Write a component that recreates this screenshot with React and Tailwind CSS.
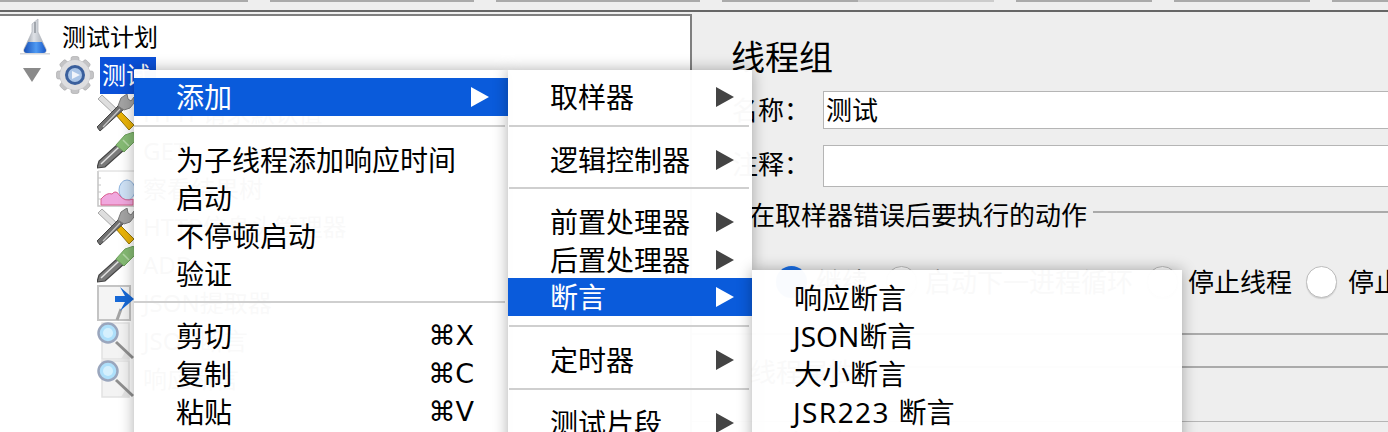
const Flask = () => (
  <svg width="30" height="38" viewBox="0 0 30 38" className="shrink-0">
    <defs>
      <linearGradient id="fl" x1="0" x2="1" y1="0" y2="0"><stop offset="0" stopColor="#1850b8" /><stop offset="0.55" stopColor="#4f9af2" /><stop offset="1" stopColor="#1a58c8" /></linearGradient>
      <linearGradient id="gl" x1="0" x2="1" y1="0" y2="0"><stop offset="0" stopColor="#7f8690" /><stop offset="0.45" stopColor="#dfe2e7" /><stop offset="1" stopColor="#98a0aa" /></linearGradient>
    </defs>
    <path d="M12 6 L18 1 L18 14 L26 31 Q27 35 23 35 L7 35 Q3 35 4 31 L12 14 Z" fill="url(#gl)" stroke="#b6bac1" strokeWidth="0.8" />
    <path d="M8 24 L22 24 L26 32 Q26 35 23 35 L7 35 Q4 35 4 32 Z" fill="url(#fl)" />
    <path d="M15 4 L15 15" stroke="#8f949c" strokeWidth="1.5" />
    <rect x="0" y="35" width="30" height="1.5" fill="#d4d6da" />
  </svg>
);
const Gear = () => (
  <svg width="38" height="38" viewBox="0 0 38 38">
    <g fill="#c4c4c6" stroke="#a6a6a8" strokeWidth="0.6">
      <circle cx="19" cy="19" r="15" />
      <rect x="15" y="0.5" width="8" height="37" rx="2" />
      <rect x="15" y="0.5" width="8" height="37" rx="2" transform="rotate(45 19 19)" />
      <rect x="15" y="0.5" width="8" height="37" rx="2" transform="rotate(90 19 19)" />
      <rect x="15" y="0.5" width="8" height="37" rx="2" transform="rotate(135 19 19)" />
    </g>
    <circle cx="19" cy="19" r="15" fill="#dedee0" />
    <circle cx="19" cy="19" r="10" fill="#3a5f9c" />
    <circle cx="19" cy="19" r="7" fill="#a9c4e6" />
    <path d="M16 15 L24 19 L16 23 Z" fill="#f0f4fa" />
  </svg>
);
const Tools = () => (
  <svg width="38" height="38" viewBox="0 0 38 38">
    <path d="M1 5 L5 1 L22 17 L18 21 Z" fill="#dedede" stroke="#a8a8a8" strokeWidth="1" />
    <path d="M19 21 L23 17 L37 31 L32 36 Z" fill="#eab308" stroke="#94760c" strokeWidth="1" />
    <path d="M3 37 L0 33 L22 11 L27 15 Z" fill="#707070" stroke="#444" strokeWidth="1" />
    <path d="M6 33 L23 15" stroke="#c8c8c8" strokeWidth="1.2" />
    <path d="M21 12 L24 4 L30 0 L31 5 L34 7 L37 3 L37 9 L33 14 L27 16 Z" fill="#a3a3a3" stroke="#7a7a7a" strokeWidth="1" />
  </svg>
);
const Dropper = () => (
  <svg width="38" height="38" viewBox="0 0 38 38">
    <path d="M0 36 L2 29 L21 12 L27 18 L8 35 Z" fill="#7a7a7a" stroke="#444" strokeWidth="1.2" />
    <path d="M4 32 L22 15" stroke="#e2e2e2" strokeWidth="1.5" />
    <path d="M19 13 L28 3 L37 0 L38 9 L27 20 Z" fill="#86bb74" stroke="#6da05c" strokeWidth="1" />
    <path d="M26 8 L32 14" stroke="#b5d9a8" strokeWidth="1.5" />
  </svg>
);
const Chart = () => (
  <svg width="38" height="38" viewBox="0 0 38 38">
    <path d="M1 1 L1 36 L37 36" fill="none" stroke="#c4c4c4" strokeWidth="1.5" />
    <path d="M1 1 L37 1" stroke="#d6d6d6" strokeWidth="1" />
    <path d="M1 8 H4 M1 15 H4 M1 22 H4 M1 29 H4" stroke="#c4c4c4" strokeWidth="1" />
    <ellipse cx="30" cy="20" rx="8" ry="10" fill="#cfe2f6" stroke="#8fb4de" strokeWidth="1" />
    <path d="M4 35 L4 29 Q10 22 15 24 Q19 19 23 26 Q28 32 36 29 L36 35 Z" fill="#f0a8de" stroke="#d9608f" strokeWidth="1" />
  </svg>
);
const ArrowBox = () => (
  <svg width="38" height="38" viewBox="0 0 38 38">
    <rect x="1" y="2" width="32" height="34" fill="#f4f4f4" stroke="#c4c4c4" strokeWidth="2" />
    <path d="M20 36 L24 25" stroke="#a4a4a4" strokeWidth="3" />
    <path d="M18 12 L28 12 L23 3 L37 15 L23 27 L28 18 L18 18 Z" fill="#1668d6" />
  </svg>
);
const Magnifier = () => (
  <svg width="38" height="38" viewBox="0 0 38 38">
    <rect x="5" y="1" width="27" height="36" fill="#f3f3f3" stroke="#e2e2e2" strokeWidth="1.5" />
    <path d="M24 37 L30 27 L32 37 Z" fill="#e4e4e4" />
    <path d="M19 20 L36 36" stroke="#8f8f8f" strokeWidth="3" />
    <circle cx="11" cy="11" r="9.5" fill="#aee0fb" stroke="#9aa6bd" strokeWidth="2.5" />
    <circle cx="11" cy="11" r="5" fill="#d5f0fd" />
  </svg>
);

const Tri = ({ light }) => (
  <svg width="18" height="20" viewBox="0 0 18 20" className="shrink-0">
    <path d="M0 0 L18 10 L0 20 Z" fill={light ? "#ffffff" : "#444444"} />
  </svg>
);

const Sep1 = () => (
  <div className="pt-[9px] pb-[14px]"><div className="h-[2px] bg-[#cfcfcf] w-[371px]" /></div>
);
const Sep2 = () => (
  <div className="pt-[9px] pb-[14px]"><div className="h-[2px] bg-[#cfcfcf] w-[240px] ml-px" /></div>
);

const MenuItem = ({ label, arrow, shortcut, active, pad, h }) => (
  <div className={`${h || "h-[38px]"} flex items-center justify-between ${pad} ${active ? "bg-[#0a5bdb] text-white" : "text-black"}`}>
    <span>{label}</span>
    {arrow && <Tri light={active} />}
    {shortcut && <span className="text-[27px] [font-family:'DejaVu_Sans','Noto_Sans',sans-serif] pr-[15px]">{shortcut}</span>}
  </div>
);

const Radio = ({ on, className }) => (
  <span className={`w-[31px] h-[32px] rounded-full shrink-0 ${on ? "bg-[#1a6fe8]" : "bg-white border border-[#bcbcbc] shadow-[0_1px_1px_rgba(0,0,0,0.12)]"} ${className}`} />
);

const TreeRow = ({ icon, label }) => (
  <div className="h-[38px] flex items-center pl-[97px]">
    <span className="w-[38px] h-[38px] shrink-0">{icon}</span>
    <span className="ml-[8px] whitespace-nowrap">{label}</span>
  </div>
);

const menuClass = "bg-white/[0.975] shadow-[0_0_14px_rgba(0,0,0,0.32)] text-[28px] leading-[36px] whitespace-nowrap";

export default function App() {
  return (
    <div className="relative w-[1388px] h-[432px] overflow-hidden bg-[#eeeeee] text-black [font-family:'Noto_Sans','Noto_Sans_CJK_SC',sans-serif]">
      {/* toolbar remnant */}
      <div className="h-[12px] border-b-2 border-[#666666]">
        <div className="flex h-[2px]">
          <div className="w-[248px] bg-[#aaaaaa]" />
          <div className="w-[22px]" />
          <div className="w-[204px] bg-[#aaaaaa]" />
          <div className="w-[22px]" />
          <div className="w-[204px] bg-[#aaaaaa]" />
          <div className="w-[22px]" />
          <div className="w-[136px] bg-[#aaaaaa]" />
          <div className="w-[136px] bg-[#cccccc]" />
          <div className="w-[22px]" />
          <div className="w-[136px] bg-[#aaaaaa]" />
          <div className="w-[22px]" />
          <div className="w-[136px] bg-[#aaaaaa]" />
          <div className="w-[22px]" />
          <div className="flex-1 bg-[#aaaaaa]" />
        </div>
      </div>

      <div className="flex mt-[2px] h-[418px]">
        {/* tree */}
        <div className="w-[692px] shrink-0 bg-white border-t-2 border-r-2 border-[#7f7f7f] text-[24px] leading-[30px] pt-[2px]">
          <div className="h-[38px] flex items-center pl-[20px]">
            <Flask />
            <span className="ml-[12px]">测试计划</span>
          </div>
          <div className="h-[38px] flex items-center pl-[23px]">
            <svg width="18" height="14" viewBox="0 0 18 14" className="shrink-0"><path d="M0 0 L18 0 L9 14 Z" fill="#8a8a8a" /></svg>
            <span className="ml-[15px]"><Gear /></span>
            <span className="ml-[6px] h-[37px] w-[56px] bg-[#0a50d8] text-white flex items-center pl-[2px]">测试</span>
          </div>
          <TreeRow icon={<Tools />} label="HTTP请求默认值" />
          <TreeRow icon={<Dropper />} label="GET" />
          <TreeRow icon={<Chart />} label="察看结果树" />
          <TreeRow icon={<Tools />} label="HTTP信息头管理器" />
          <TreeRow icon={<Dropper />} label="ADD" />
          <TreeRow icon={<ArrowBox />} label="JSON提取器" />
          <TreeRow icon={<Magnifier />} label="JSON断言" />
          <TreeRow icon={<Magnifier />} label="响应断言" />
        </div>

        {/* right panel */}
        <div className="flex-1 min-w-0 text-[26px] whitespace-nowrap">
          <div className="mt-[25px] h-[36px] pl-[39px] text-[34px] leading-[36px]">线程组</div>

          <div className="mt-[16px] flex items-center h-[38px] pl-[40px]">
            <span className="w-[91px]">名称：</span>
            <div className="flex-1 h-[38px] bg-white border border-[#b5b5b5] border-r-0 pl-[2px] leading-[36px]">测试</div>
          </div>
          <div className="mt-[16px] flex items-center h-[42px] pl-[40px]">
            <span className="w-[91px] pb-[4px]">注释：</span>
            <div className="flex-1 h-[42px] bg-white border border-[#b5b5b5] border-r-0" />
          </div>

          <div className="mt-[12px] h-[32px] flex pl-[57px] leading-[32px]">
            <span>在取样器错误后要执行的动作</span>
            <div className="flex-1 h-[2px] mt-[12px] ml-[6px] bg-[#aaaaaa]" />
          </div>

          <div className="mt-[35px] h-[32px] flex items-center pl-[84px] leading-[32px]">
            <Radio on />
            <span className="ml-[9px]">继续</span>
            <Radio className="ml-[18px]" />
            <span className="ml-[8px]">启动下一进程循环</span>
            <Radio className="ml-[14px]" />
            <span className="ml-[10px]">停止线程</span>
            <Radio className="ml-[14px]" />
            <span className="ml-[11px]">停止测试</span>
          </div>

          <div className="mt-[35px] h-[2px] bg-[#aaaaaa]" />

          <div className="mt-[21px] h-[32px] flex pl-[58px] leading-[32px]">
            <span>线程属性</span>
            <div className="flex-1 h-[2px] mt-[10px] ml-[5px] bg-[#aaaaaa]" />
          </div>

          <div className="mt-[33px] h-px bg-[#b5b5b5]" />
          <div className="mt-[6px] pl-[88px] leading-[32px]">线程数：</div>
        </div>
      </div>

      {/* context menu */}
      <div className={`absolute left-[134px] top-[70px] w-[374px] h-[400px] pt-[8px] ${menuClass}`}>
        <MenuItem label="添加" arrow active pad="pl-[42px] pr-[19px]" />
        <Sep1 />
        <MenuItem label="为子线程添加响应时间" pad="pl-[42px]" />
        <MenuItem label="启动" pad="pl-[42px]" />
        <MenuItem label="不停顿启动" pad="pl-[42px]" />
        <MenuItem label="验证" pad="pl-[42px]" />
        <div className="pt-[8px] pb-[14px]"><div className="h-[2px] bg-[#cfcfcf] w-[371px]" /></div>
        <MenuItem label="剪切" shortcut="⌘X" pad="pl-[42px] pr-[19px]" />
        <MenuItem label="复制" shortcut="⌘C" pad="pl-[42px] pr-[19px]" />
        <MenuItem label="粘贴" shortcut="⌘V" pad="pl-[42px] pr-[19px]" />
      </div>

      {/* submenu */}
      <div className={`absolute left-[508px] top-[70px] w-[244px] h-[400px] pt-[8px] ${menuClass}`}>
        <MenuItem label="取样器" arrow pad="pl-[42px] pr-[18px]" />
        <Sep2 />
        <MenuItem label="逻辑控制器" arrow pad="pl-[42px] pr-[18px]" />
        <div className="pt-[8px] pb-[14px]"><div className="h-[2px] bg-[#cfcfcf] w-[240px] ml-px" /></div>
        <MenuItem label="前置处理器" arrow pad="pl-[42px] pr-[18px]" />
        <MenuItem label="后置处理器" arrow pad="pl-[42px] pr-[18px]" h="h-[37px]" />
        <MenuItem label="断言" arrow active pad="pl-[42px] pr-[18px]" />
        <Sep2 />
        <MenuItem label="定时器" arrow pad="pl-[42px] pr-[18px]" />
        <Sep2 />
        <MenuItem label="测试片段" arrow pad="pl-[42px] pr-[18px]" />
      </div>

      {/* sub-submenu */}
      <div className={`absolute left-[752px] top-[270px] w-[430px] h-[220px] pt-[9px] ${menuClass}`}>
        <MenuItem label="响应断言" pad="pl-[42px]" />
        <MenuItem label="JSON断言" pad="pl-[41px]" />
        <MenuItem label="大小断言" pad="pl-[42px]" />
        <MenuItem label={<><span className="tracking-[1.4px]">JSR223 </span>断言</>} pad="pl-[41px]" />
      </div>
    </div>
  );
}
